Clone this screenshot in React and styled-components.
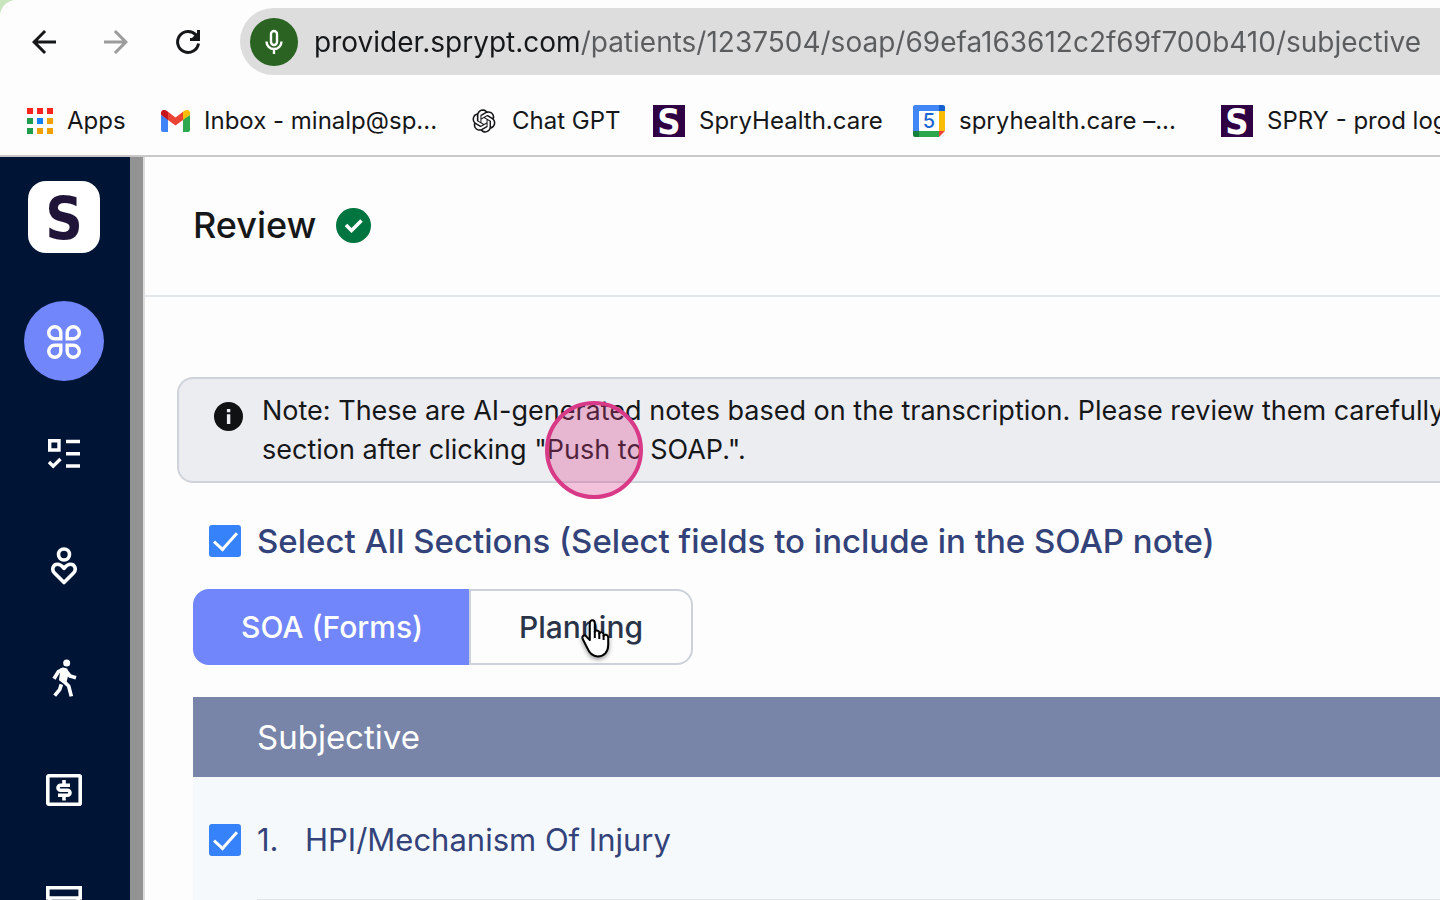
import React, { useState } from "react";
import styled, { createGlobalStyle, css } from "styled-components";
import { RiOpenaiFill } from "react-icons/ri";
import { MdArrowBack, MdArrowForward, MdRefresh } from "react-icons/md";

const bookmarks = [
  { label: "Apps", icon: "apps", width: 100 },
  { label: "Inbox - minalp@sp...", icon: "gmail", width: 275 },
  { label: "Chat GPT", icon: "openai", width: 149 },
  { label: "SpryHealth.care", icon: "spry", width: 226 },
  { label: "spryhealth.care –...", icon: "calendar", width: 274 },
  { label: "SPRY - prod logs", icon: "spry", width: 260 },
];

const AppsIcon = () => {
  const colors = [
    "#f9231f", "#f9231f", "#f9231f",
    "#1f9d4d", "#0f80f5", "#f0a000",
    "#1f9d4d", "#f0a000", "#f0a000",
  ];
  return (
    <svg width="26" height="26" viewBox="0 0 26 26">
      {colors.map((fill, i) => (
        <rect
          key={i}
          x={(i % 3) * 10}
          y={Math.floor(i / 3) * 10}
          width="6"
          height="6"
          fill={fill}
        />
      ))}
    </svg>
  );
};

const GmailIcon = () => (
  <svg width="29" height="22" viewBox="0 0 29 22">
    <path d="M0 5v15a2 2 0 0 0 2 2h5V9z" fill="#3f83f8" />
    <path d="M29 5v15a2 2 0 0 1-2 2h-5V9z" fill="#2ea84f" />
    <path d="M7 1.800l7.500 5.700L22 1.800V10l-7.500 5.600L7 10z" fill="#ea4335" />
    <path d="M0 3c0-2.800 3.200-3.900 5.300-2.400L7 1.800V10L0 4.800z" fill="#c5161c" />
    <path d="M29 3c0-2.800-3.200-3.900-5.300-2.400L22 1.800V10l7-5.200z" fill="#fbbc04" />
  </svg>
);

const BookmarkIcon = ({ name }) => {
  if (name === "apps") return <AppsIcon />;
  if (name === "gmail") return <GmailIcon />;
  if (name === "openai") return <RiOpenaiFill size={28} />;
  if (name === "calendar") {
    return (
      <CalendarTile>
        <svg width="32" height="32" viewBox="0 0 32 32">
          <path d="M0 2a2 2 0 0 1 2-2h24v6H6v20H0z" fill="#4285f4" />
          <path d="M26 0h4a2 2 0 0 1 2 2v4h-6z" fill="#1560d0" />
          <path d="M26 6h6v20h-6z" fill="#fbbc04" />
          <path d="M0 26h6v6H2a2 2 0 0 1-2-2z" fill="#15803a" />
          <path d="M6 26h20v6H6z" fill="#2ca64c" />
          <path d="M26 26h6l-6 6z" fill="#ea4335" />
          <path d="M6 6h20v20H6z" fill="#fff" />
        </svg>
        <CalendarDay>5</CalendarDay>
      </CalendarTile>
    );
  }
  return <SpryTile>S</SpryTile>;
};

const PetalsIcon = () => (
  <svg width="34" height="34" viewBox="0 0 34 34" fill="none" stroke="#fff" strokeWidth="3.400">
    <path d="M13.800 13.800H7.750A6.050 6.050 0 1 1 13.800 7.750z" />
    <path d="M20.200 13.800h6.050A6.050 6.050 0 1 0 20.200 7.750z" />
    <path d="M13.800 20.200H7.750A6.050 6.050 0 1 0 13.800 26.250z" />
    <path d="M20.200 20.200h6.050A6.050 6.050 0 1 1 20.200 26.250z" />
  </svg>
);

const ChecklistIcon = () => (
  <svg width="32" height="30" viewBox="0 0 32 30" fill="none" stroke="#fff" strokeWidth="3.400">
    <path d="M1.700 1.700h9.300v9.300H1.700z" />
    <path d="M1 23l4.200 4.200L12.500 20" />
    <path d="M18 2.500h14M18 14.700h14M18 27h14" />
  </svg>
);

const CareIcon = () => (
  <svg width="28" height="38" viewBox="0 0 28 38" fill="none" stroke="#fff" strokeWidth="3.600">
    <circle cx="14" cy="7.500" r="5.500" />
    <path
      d="M14 35.500L4.500 26c-3.300-3.500-1.500-8.700 3-8.700 2.700 0 4.200 1.200 6.500 4 2.300-2.800 3.800-4 6.500-4 4.500 0 6.300 5.200 3 8.700z"
      strokeLinejoin="round"
    />
  </svg>
);

const WalkIcon = () => (
  <svg width="40" height="46" viewBox="0 0 120 138" fill="none" stroke="#fff">
    <circle cx="68" cy="24" r="10.500" fill="#fff" stroke="none" />
    <path d="M48 41q12-6 22 0l4 14-6 25-11 4-12-8 3-24z" fill="#fff" stroke="none" />
    <path
      d="M60 42L43 50 30 71M66 48l12 15 18 5"
      strokeWidth="11"
      strokeLinejoin="round"
    />
    <path
      d="M56 76l18 17 8 31M52 88l-5 16-15 18"
      strokeWidth="11"
      strokeLinejoin="round"
    />
  </svg>
);

const MoneyIcon = () => (
  <svg width="36" height="32" viewBox="0 0 36 32" fill="none" stroke="#fff" strokeWidth="3.600">
    <rect x="1.800" y="1.800" width="32.400" height="28.400" rx="1" />
    <path d="M24 11.200H14.500a2.500 2.500 0 0 0-2.500 2.500 2.500 2.500 0 0 0 2.500 2.500h7a2.500 2.500 0 0 1 2.500 2.500 2.500 2.500 0 0 1-2.500 2.500H12M18 6v4M18 22v4.500" />
  </svg>
);

const CardsIcon = () => (
  <svg width="36" height="32" viewBox="0 0 36 32" fill="none" stroke="#fff" strokeWidth="3.600">
    <path d="M1.800 12V1.800h32.400V12zM4 12v18h28V12" />
  </svg>
);

const HandPointer = () => (
  <svg width="32" height="44" viewBox="0 0 32 44">
    <path
      d="M8.800 22V5.500c0-4.300 5-4.300 5 0V14c.6-2.400 4.200-2 4.500.6v1.200c.7-2.200 4-1.800 4.300.6v1.400c.9-1.900 4.400-1.300 4.600 1.700V27c0 7-4.200 11.400-10.500 11.400-6 0-8.400-3.400-10.300-8.200L1.600 20.700c-1-3.200 2.400-4.500 4-1.800z"
      fill="#fff"
      stroke="#000"
      strokeWidth="2"
      strokeLinejoin="round"
    />
    <path d="M13.800 13v7M18.300 15v6M22.600 17v5" stroke="#000" strokeWidth="2" />
  </svg>
);

const navItems = [
  { label: "Dashboard", icon: <PetalsIcon />, active: true },
  { label: "Tasks", icon: <ChecklistIcon /> },
  { label: "Patients", icon: <CareIcon /> },
  { label: "Exercises", icon: <WalkIcon /> },
  { label: "Billing", icon: <MoneyIcon /> },
  { label: "Payments", icon: <CardsIcon /> },
];

const App = () => {
  const [tab, setTab] = useState("forms");
  const [allSelected, setAllSelected] = useState(true);
  const [hpi, setHpi] = useState(true);

  return (
    <>
      <GlobalStyle />
      <Page>
        <Browser>
          <AddressRow>
            <IconButton type="button" aria-label="Back">
              <MdArrowBack size={36} />
            </IconButton>
            <IconButton type="button" aria-label="Forward" $muted>
              <MdArrowForward size={36} />
            </IconButton>
            <IconButton type="button" aria-label="Reload">
              <svg width="36" height="36" viewBox="0 0 36 36" fill="none" stroke="currentColor" strokeWidth="3">
                <path d="M28.500 19.500A10.500 10.500 0 1 1 26 11l2 3" />
                <path d="M28.500 6v9.500H20" />
                <path d="M28 8v7h-7z" fill="currentColor" stroke="none" />
              </svg>
            </IconButton>
            <AddressBar>
              <MicBadge>
                <svg width="20" height="26" viewBox="0 0 20 26" fill="none" stroke="#fff" strokeWidth="2.400">
                  <rect x="7" y="2" width="6" height="14" rx="3" />
                  <path d="M2.500 12.500a7.500 7.500 0 0 0 15 0M10 20v5" />
                </svg>
              </MicBadge>
              <AddressInput
                aria-label="Address"
                spellCheck={false}
                defaultValue="provider.sprypt.com/patients/1237504/soap/69efa163612c2f69f700b410/subjective"
              />
            </AddressBar>
          </AddressRow>
          <Bookmarks>
            {bookmarks.map(({ label, icon, width }) => (
              <Bookmark key={label} href="#" $width={width}>
                <BookmarkIcon name={icon} />
                {label}
              </Bookmark>
            ))}
          </Bookmarks>
        </Browser>
        <Workspace>
          <Sidebar>
            <Logo>S</Logo>
            {navItems.map(({ label, icon, active }) => (
              <NavItem key={label} href="#" aria-label={label} $active={active}>
                {icon}
              </NavItem>
            ))}
          </Sidebar>
          <Content>
            <ReviewHeader>
              <Title>Review</Title>
              <svg width="35" height="35" viewBox="0 0 35 35">
                <circle cx="17.500" cy="17.500" r="17.500" fill="#00753f" />
                <path d="M10 17l5.500 5.500L25.500 12.500" fill="none" stroke="#fff" strokeWidth="3.500" />
              </svg>
            </ReviewHeader>
            <Note>
              <svg width="29" height="29" viewBox="0 0 29 29">
                <circle cx="14.500" cy="14.500" r="14.500" fill="#101113" />
                <path d="M12.900 7h3.400v3.300h-3.400zM12.900 12.300h3.400V22h-3.400z" fill="#ecedf1" />
              </svg>
              <NoteText>
                Note: These are AI-generated notes based on the transcription.
                Please review them carefully
                <br />
                section after clicking "Push to SOAP.".
              </NoteText>
              <ClickRipple />
            </Note>
            <Review>
              <CheckLabel $bold>
                <Checkbox
                  checked={allSelected}
                  onChange={() => setAllSelected(!allSelected)}
                />
                Select All Sections (Select fields to include in the SOAP note)
              </CheckLabel>
              <Tabs>
                <Tab type="button" $active={tab === "forms"} onClick={() => setTab("forms")}>
                  SOA (Forms)
                </Tab>
                <Tab type="button" $active={tab === "planning"} onClick={() => setTab("planning")}>
                  Planning
                  <Pointer>
                    <HandPointer />
                  </Pointer>
                </Tab>
              </Tabs>
              <Section>
                <SectionTitle>Subjective</SectionTitle>
                <SectionRow>
                  <CheckLabel>
                    <Checkbox checked={hpi} onChange={() => setHpi(!hpi)} />
                    <RowNumber>1.</RowNumber>
                    HPI/Mechanism Of Injury
                  </CheckLabel>
                </SectionRow>
                <Divider />
              </Section>
            </Review>
          </Content>
        </Workspace>
      </Page>
    </>
  );
};

const GlobalStyle = createGlobalStyle`
  * {
    box-sizing: border-box;
  }
  body {
    margin: 0;
    background: #c9e5bd;
    font-family: Inter, "Liberation Sans", sans-serif;
    color: #161719;
  }
  button,
  input {
    font: inherit;
  }
  svg {
    display: block;
    flex-shrink: 0;
  }
`;

const Page = styled.div`
  display: flex;
  flex-direction: column;
  height: 100vh;
  overflow: hidden;
  background: #fdfdfd;
  border-top-left-radius: 16px;
`;

const Browser = styled.header`
  flex-shrink: 0;
  border-bottom: 2px solid #c8c8c8;
`;

const AddressRow = styled.div`
  display: flex;
  align-items: center;
  padding: 8px 0 0 26px;
`;

const IconButton = styled.button`
  display: flex;
  width: 36px;
  margin-right: 36px;
  padding: 0;
  border: 0;
  background: transparent;
  color: ${({ $muted }) => ($muted ? "#9b9b9b" : "#161719")};
`;

const AddressBar = styled.div`
  display: flex;
  flex: 1;
  align-items: center;
  gap: 16px;
  height: 67px;
  margin-left: -2px;
  padding-left: 10px;
  border-radius: 34px 0 0 34px;
  background: #dddddd;
`;

const MicBadge = styled.span`
  display: flex;
  flex-shrink: 0;
  align-items: center;
  justify-content: center;
  width: 48px;
  height: 48px;
  border-radius: 50%;
  background: #2a6322;
`;

/* host part is darker than the path */
const AddressInput = styled.input`
  flex: 1;
  min-width: 0;
  padding: 0;
  border: 0;
  outline: 0;
  background: linear-gradient(90deg, #161719 267px, #5b5c5e 267px);
  background-clip: text;
  -webkit-text-fill-color: transparent;
  font-size: 28px;
  line-height: 40px;
`;

const Bookmarks = styled.nav`
  display: flex;
  gap: 34px;
  height: 80px;
  padding: 12px 0 0 27px;
`;

const Bookmark = styled.a`
  display: flex;
  flex-shrink: 0;
  align-items: center;
  gap: 14px;
  width: ${({ $width }) => $width}px;
  height: 68px;
  color: inherit;
  font-size: 24px;
  line-height: 32px;
  text-decoration: none;
  white-space: nowrap;
`;

const SpryTile = styled.span`
  display: flex;
  flex-shrink: 0;
  align-items: center;
  justify-content: center;
  width: 32px;
  height: 32px;
  padding-top: 2px;
  background: #2f0044;
  color: #fff;
  font-family: "DejaVu Sans Condensed", "DejaVu Sans", sans-serif;
  font-size: 36px;
  font-weight: 700;
  line-height: 32px;
`;

const CalendarTile = styled.span`
  position: relative;
`;

const CalendarDay = styled.span`
  position: absolute;
  inset: 0;
  color: #1a67d2;
  font-size: 20px;
  font-weight: 500;
  text-align: center;
`;

const Workspace = styled.div`
  display: flex;
  flex: 1;
  min-height: 0;
`;

const Sidebar = styled.nav`
  display: flex;
  flex-direction: column;
  flex-shrink: 0;
  align-items: center;
  gap: 32px;
  width: 145px;
  padding: 24px 15px 0 0;
  border-right: 2px solid #dcdcdc;
  background: linear-gradient(90deg, #001435 130px, #929292 130px);
  overflow: hidden;
`;

const Logo = styled.div`
  display: flex;
  flex-shrink: 0;
  align-items: center;
  justify-content: center;
  width: 72px;
  height: 72px;
  margin-bottom: 16px;
  padding-top: 4px;
  border-radius: 18px;
  background: #fff;
  color: #201538;
  font-family: "DejaVu Sans Condensed", "DejaVu Sans", sans-serif;
  font-size: 58px;
  font-weight: 700;
  line-height: 68px;
`;

const NavItem = styled.a`
  display: flex;
  flex-shrink: 0;
  align-items: center;
  justify-content: center;
  width: 80px;
  height: 80px;
  padding-top: 2px;
  border-radius: 50%;
  background: ${({ $active }) => ($active ? "#7186fb" : "transparent")};
  color: #fff;
`;

const Content = styled.main`
  flex: 1;
  min-width: 0;
  overflow: hidden;
`;

const ReviewHeader = styled.div`
  display: flex;
  align-items: center;
  gap: 20px;
  height: 140px;
  padding: 0 48px 2px;
  border-bottom: 2px solid #e3e6e9;
`;

const Title = styled.h1`
  margin: 0;
  font-size: 36px;
  font-weight: 500;
  line-height: 54px;
`;

const Note = styled.div`
  position: relative;
  display: flex;
  gap: 19px;
  margin: 80px 0 0 32px;
  padding: 12px 0 12px 35px;
  border: 2px solid #cfd3da;
  border-right: 0;
  border-radius: 16px 0 0 16px;
  background: #ecedf1;
  > svg {
    margin-top: 11px;
  }
`;

const NoteText = styled.p`
  margin: 0;
  font-size: 27px;
  line-height: 39px;
  white-space: nowrap;
`;

const ClickRipple = styled.span`
  position: absolute;
  top: 22px;
  left: 366px;
  width: 98px;
  height: 98px;
  border: 4px solid #d83a88;
  border-radius: 50%;
  background: rgba(217, 60, 140, 0.3);
`;

const Review = styled.div`
  padding: 34px 0 0 48px;
`;

const CheckLabel = styled.label`
  display: flex;
  align-items: center;
  gap: 16px;
  padding-left: 16px;
  color: #33437a;
  font-size: ${({ $bold }) => ($bold ? "33px" : "31px")};
  font-weight: ${({ $bold }) => ($bold ? 500 : 400)};
  line-height: 48px;
  white-space: nowrap;
`;

const Checkbox = styled.input.attrs({ type: "checkbox" })`
  flex-shrink: 0;
  appearance: none;
  width: 32px;
  height: 32px;
  margin: 0;
  border: 2px solid #3682fa;
  border-radius: 3px;
  background: #fff;
  &:checked {
    background: #3682fa;
  }
  &:checked::before {
    content: "";
    display: block;
    width: 10px;
    height: 20px;
    margin: 0 0 0 8px;
    border: solid #fff;
    border-width: 0 3px 3px 0;
    transform: rotate(42deg);
  }
`;

const RowNumber = styled.span`
  width: 32px;
`;

const Tabs = styled.div`
  display: flex;
  margin: 24px 0 32px;
`;

const Tab = styled.button`
  position: relative;
  height: 76px;
  padding: 0 46px;
  border: 2px solid #cdd2da;
  background: #fdfdfd;
  color: #2a3448;
  font-size: 30px;
  font-weight: 500;
  line-height: 42px;
  white-space: nowrap;
  &:first-child {
    width: 276px;
    border-radius: 16px 0 0 16px;
  }
  &:last-child {
    width: 224px;
    border-radius: 0 16px 16px 0;
  }
  ${({ $active }) =>
    $active &&
    css`
      border-color: #7186fb;
      background: #7186fb;
      color: #fff;
    `}
`;

const Pointer = styled.span`
  position: absolute;
  top: 27px;
  left: 110px;
  filter: drop-shadow(0 2px 2px rgba(0, 0, 0, 0.4));
`;

const Section = styled.section`
  background: #f5f9fc;
`;

const SectionTitle = styled.h2`
  margin: 0;
  padding: 16px 64px;
  background: #7885a8;
  color: #fff;
  font-size: 33px;
  font-weight: 400;
  line-height: 48px;
`;

const SectionRow = styled.div`
  padding: 39px 0 35px;
`;

const Divider = styled.hr`
  height: 2px;
  margin: 0 0 0 64px;
  border: 0;
  background: #e2e6ea;
`;

export default App;
